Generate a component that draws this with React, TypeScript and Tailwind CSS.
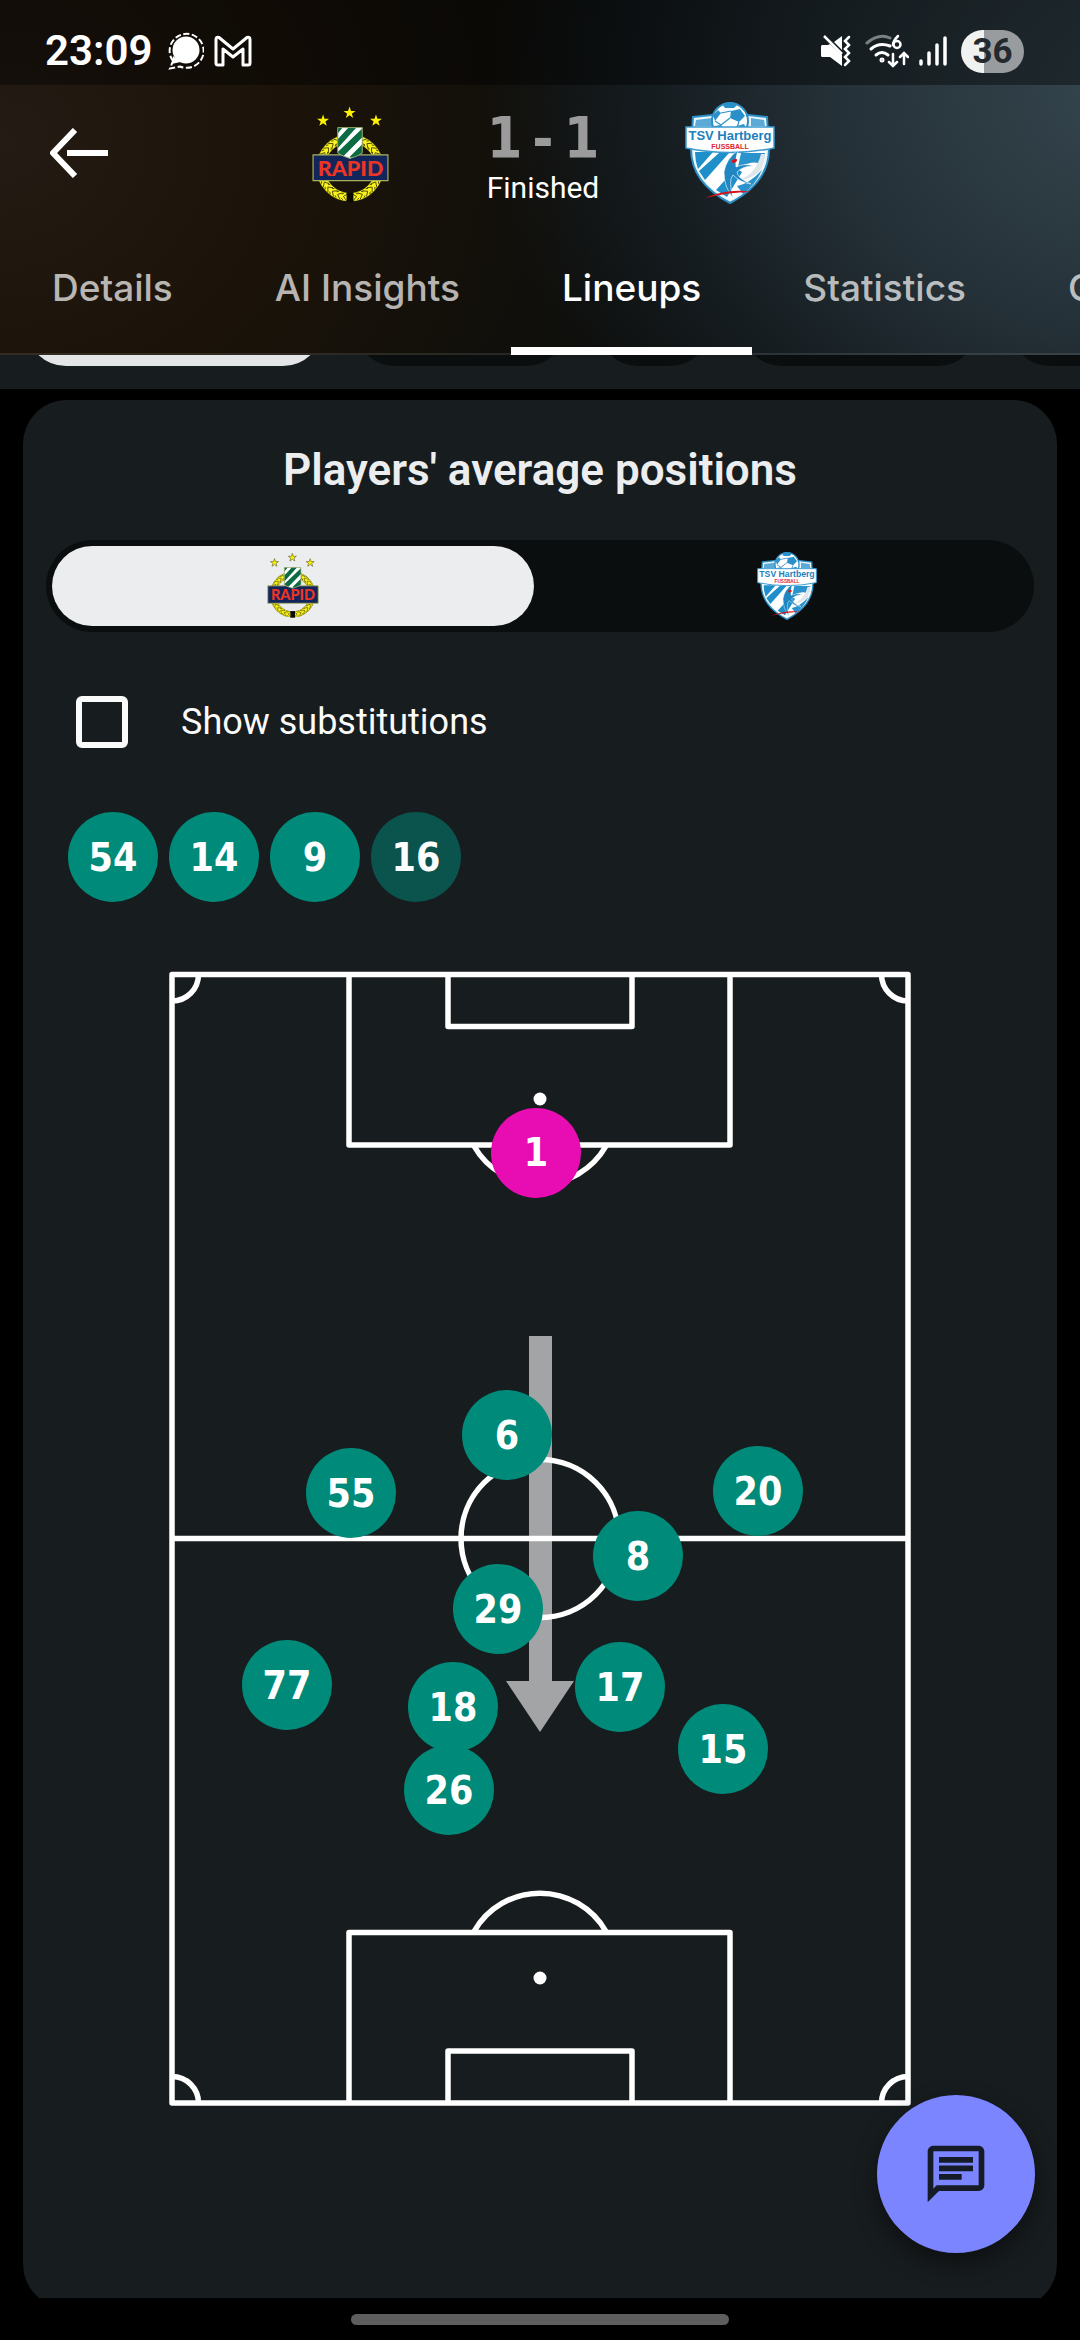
import { useState } from 'react';
import { MdOutlineChat } from 'react-icons/md';

interface Player {
  number: number;
  x: number;
  y: number;
  keeper?: boolean;
}

// Pitch coordinates, in the units of the pitch viewBox
const PITCH_W = 742;
const PITCH_H = 1136;

const players: Player[] = [
  { number: 1, x: 367, y: 182, keeper: true },
  { number: 6, x: 338, y: 464 },
  { number: 55, x: 182, y: 522 },
  { number: 20, x: 589, y: 520 },
  { number: 8, x: 469, y: 585 },
  { number: 29, x: 329, y: 638 },
  { number: 77, x: 118, y: 714 },
  { number: 18, x: 284, y: 736 },
  { number: 17, x: 451, y: 716 },
  { number: 15, x: 554, y: 778 },
  { number: 26, x: 280, y: 819 },
];

const bench = [
  { number: 54, used: true },
  { number: 14, used: true },
  { number: 9, used: true },
  { number: 16, used: false },
];

const tabs = ['Details', 'AI Insights', 'Lineups', 'Statistics', 'Odds'];

const star = 'M0-6.4 1.5-2H6.1L2.4.8 3.8 5.2 0 2.5-3.8 5.2-2.4.8-6.1-2H-1.5Z';

// Wreath veins, one pair every 12 degrees
const veins = Array.from({ length: 30 }, (_, i) => i * 12);

function RapidCrest({ className, outline }: { className?: string; outline?: boolean }) {
  return (
    <svg viewBox="0 0 78 100" className={className} role="img" aria-label="Rapid">
      <g fill="#fff200" stroke={outline ? '#4a4a20' : 'none'} strokeWidth="0.8">
        <path d={star} transform="translate(11 15)" />
        <path d={star} transform="translate(38 7)" />
        <path d={star} transform="translate(65 15)" />
      </g>
      <circle cx="38.500" cy="63" r="30" fill="none" stroke="#6b6808" strokeWidth="9" />
      <circle cx="38.500" cy="63" r="30" fill="none" stroke="#fbf51d" strokeWidth="8" />
      <g fill="none" stroke="#4b4806" strokeWidth="0.900">
        {veins.map((a) => (
          <path
            key={a}
            d={a > 180 ? 'M35 29.500l4 3.500-4 3.500M39 29.500l2 1.500M39 36.500l2-1.500' : 'M42 29.500 38 33l4 3.500M38 29.500l-2 1.500M38 36.500l-2-1.500'}
            transform={`rotate(${a} 38.5 63)`}
          />
        ))}
      </g>
      <path d="M35 88h7v10h-7z" fill="#0a0a05" />
      <path d="M.8 49.800h76.400v26.400H.8z" fill="#13265c" stroke="#a8b25a" strokeWidth="1.200" />
      <path d="M26 22h25v26q-6 4-12.500 5.500Q32 52 26 48Z" fill="#fff" />
      <g fill="#0b6b43">
        <path d="M26 22h5l-5 6zM37 22h8L26 43v-9zM51 23v9L32 51l-6-3v-1zM51 39v9q-5 3-10 5l-3-1z" />
      </g>
      <path d="M26 22h25v26q-6 4-12.500 5.500Q32 52 26 48Z" fill="none" stroke="#8fa060" strokeWidth="1" />
      <text x="39" y="71" textAnchor="middle" fill="#ee3524" className="font-['Lato','Liberation_Sans',sans-serif] text-[22px] font-black">
        RAPID
      </text>
    </svg>
  );
}

function HartbergCrest({ className }: { className?: string }) {
  return (
    <svg viewBox="0 0 90 102" className={className} role="img" aria-label="TSV Hartberg">
      <path d="M8 15 27 13h36l19 2 2 32c0 24-16 42-39 54C22 89 6 71 6 47Z" fill="#e9f5fb" stroke="#2b8fc6" strokeWidth="2" />
      <path d="M11 18 27 16v8H10zM66 16l13 2 1 6H66z" fill="#5aa9d6" />
      <path d="M9 48c0 22 14 38 36 50 22-12 36-28 36-50Z" fill="#fff" />
      <path d="M10 50h18L13 67q-3-8-3-17ZM44 51 20 78l-6-9 20-18zM31 88l20-22 6 4-15 25z" fill="#1f8fca" />
      <path d="M56 51h24q-1 8-3 12-6-6-24 2zM77 68q-6 14-19 24l-6-8q12-2 25-16Z" fill="#2b93cb" />
      <path d="M76 52q-5 20-22 26 14-1 22-10 4-8 4-16z" fill="#dfe6ea" />
      <circle cx="45" cy="19" r="18" fill="#fff" stroke="#2b8fc6" strokeWidth="2" />
      <path d="M37 2q8-3 16 0l-4 4h-9zM46 9l9-2 5 7-6 6-9-4zM28 13l5-5 3 3-6 8zM29 24l7-1 5 7H29zM52 24l7-2 3 6H52z" fill="#2a90c9" />
      <path d="M36 11l10-2M36 23l9-7M36 23l-6-4M54 20l-2 5M41 29l11-4" stroke="#2a90c9" strokeWidth="1.200" />
      <path d="M1 25h88v21q-44 9-88 0Z" fill="#fff" stroke="#3d9bcf" strokeWidth="1.500" />
      <path d="M53 48q-12 9-14 22 0 15 9 26-5-18 0-23 8 8 18 9-14-6-14-12 6-6 16-6-8-3-17 1-1-8 2-17Z" fill="#1f86c2" stroke="#fff" strokeWidth="0.600" />
      <ellipse cx="49.500" cy="59" rx="2.800" ry="1.800" fill="#d7141a" transform="rotate(-25 49 59)" />
      <path d="M20 96Q44 86 66 90 44 90 20 96Z" fill="#d7141a" />
      <text x="45" y="38" textAnchor="middle" fill="#1c80bd" className="font-['Liberation_Sans',sans-serif] text-[13px] font-bold">
        TSV Hartberg
      </text>
      <text x="45" y="46.500" textAnchor="middle" fill="#e0222a" className="font-['Liberation_Sans',sans-serif] text-[7px] font-bold">
        FUSSBALL
      </text>
    </svg>
  );
}

function StatusBar() {
  return (
    <div className="flex h-[85px] items-center bg-black/40 pt-[17px] pr-14 pl-[45px] text-white">
      <span className="font-['Roboto',sans-serif] text-[42px] leading-none font-semibold">23:09</span>
      <svg viewBox="0 0 36 38" className="ml-4 h-[38px] w-9">
        <circle cx="18" cy="18" r="13.500" fill="#fff" />
        <path d="M5 24 3.500 32l9-2z" fill="#fff" />
        <path d="M5 29a17 17 0 1 1 7 5.500L2 36.500Z" fill="none" stroke="#fff" strokeWidth="2" strokeDasharray="6 2.500" />
      </svg>
      <svg viewBox="0 0 38 32" className="ml-2.5 h-8 w-[38px]">
        <path
          d="M5 2.500 19 14 33 2.500q3-1 3 2V28q0 2-2 2h-5V14L19 22 9 14v16H4q-2 0-2-2V4.500q0-3 3-2Z"
          fill="none"
          stroke="#fff"
          strokeWidth="3"
          strokeLinejoin="round"
        />
      </svg>
      <div className="ml-auto flex items-center">
        <svg viewBox="0 0 32 32" className="mr-3 size-8">
          <path d="M1 10h6l2-1L21 20v11L9 22H1q-1 0-1-2v-8q0-2 1-2ZM13 7l8-6v14z" fill="#fff" />
          <path d="M3 1l18 18" stroke="#fff" strokeWidth="2.500" />
          <path d="M28 2l-4 4 4 4-4 4 4 4-4 4 4 4-4 4" fill="none" stroke="#fff" strokeWidth="2.500" strokeLinecap="round" />
        </svg>
        <svg viewBox="0 0 44 34" className="mr-2.5 h-[34px] w-11" fill="none" stroke="#fff" strokeWidth="3" strokeLinecap="round">
          <path d="M2 9Q14-1 25 4" stroke="#7b8083" />
          <path d="M6 15q8-7 19-3M11 21q6-5 12 0" />
          <circle cx="17" cy="26" r="1" />
          <path d="M33 2q-5 5-5 9" strokeWidth="2.500" />
          <circle cx="32" cy="10.500" r="3.500" strokeWidth="2.500" />
          <path d="M28 20v12m-4-4 4 4 4-4M39 30V19m-4 4 4-4 4 4" strokeWidth="2.500" />
        </svg>
        <svg viewBox="0 0 28 32" className="mr-3.5 h-8 w-7" stroke="#fff" strokeWidth="3.500" strokeLinecap="round">
          <path d="M2 26v3M10 18v11M18 10v19M26 3v26" />
        </svg>
        <div className="flex h-[43px] w-[63px] items-center justify-center rounded-full bg-linear-to-r from-[#f0f1f1] from-36% to-[#999c9e] to-36% text-[#23292d]">
          <span className="font-['Roboto',sans-serif] text-[35px] leading-none font-bold">36</span>
        </div>
      </div>
    </div>
  );
}

function Header() {
  return (
    <header className="bg-[#0d0e0c] bg-[radial-gradient(ellipse_60%_150%_at_105%_25%,#36474f_0%,#253138_45%,#151c20_75%,#0d0e0c00_100%),radial-gradient(ellipse_60%_160%_at_0%_40%,#241b14_0%,#1b1309_45%,#0d0e0c00_100%)] text-white">
      <StatusBar />
      <div className="flex h-[135px] items-start px-[50px] pt-[17px]">
        <button type="button" aria-label="Back" className="mt-[26px] mr-[204px]">
          <svg viewBox="0 0 58 50" className="h-[50px] w-[58px]" fill="none" stroke="#fff" strokeWidth="6">
            <path d="M25 2 3 25l22 23" strokeLinejoin="round" />
            <path d="M17 25h41" />
          </svg>
        </button>
        <RapidCrest className="mt-1 h-[98px] w-[77px]" />
        <div className="w-[296px] pl-3 text-center">
          <div className="flex justify-center gap-2.5 pt-2 font-['DejaVu_Sans_Condensed','DejaVu_Sans',sans-serif] text-[57px] leading-[56px] font-bold text-[#9b9b9b]">
            <span>1</span>
            <span>-</span>
            <span>1</span>
          </div>
          <div className="font-['Roboto',sans-serif] text-[30px] leading-[44px]">Finished</div>
        </div>
        <HartbergCrest className="h-[102px] w-[90px]" />
      </div>
      <nav className="flex h-[135px] overflow-hidden pl-px shadow-[inset_0_-2px_0_rgba(255,255,255,0.1)]">
        {tabs.map((tab) => (
          <a
            key={tab}
            href={`#${tab}`}
            className={`flex shrink-0 items-center border-b-8 px-[51px] pt-2 font-['Inter',sans-serif] text-[37px] font-medium ${
              tab === 'Lineups' ? 'border-white text-white' : 'border-transparent text-white/70'
            }`}
          >
            {tab}
          </a>
        ))}
      </nav>
    </header>
  );
}

// Lower edge of the filter chips that have scrolled under the header
function FilterChips() {
  return (
    <div className="flex h-[34px] shrink-0 items-end gap-8 overflow-hidden bg-[#171c1e] pb-[23px] pl-[26px]">
      <div className="h-20 w-[297px] shrink-0 rounded-full bg-[#e3e5e6]" />
      <div className="h-20 w-[211px] shrink-0 rounded-full bg-[#0a0e0f]" />
      <div className="h-20 w-28 shrink-0 rounded-full bg-[#0a0e0f]" />
      <div className="h-20 w-[236px] shrink-0 rounded-full bg-[#0a0e0f]" />
      <div className="h-20 w-[211px] shrink-0 rounded-full bg-[#0a0e0f]" />
    </div>
  );
}

function Shirt({ number, className }: { number: number; className: string }) {
  return (
    <span
      className={`flex size-[90px] items-center justify-center rounded-full font-['DejaVu_Sans_Condensed','DejaVu_Sans',sans-serif] text-[39px] leading-none font-bold text-white ${className}`}
    >
      {number}
    </span>
  );
}

function Pitch() {
  return (
    <div className="relative mx-auto mt-[69px] w-full max-w-[742px]">
      <svg viewBox={`0 0 ${PITCH_W} ${PITCH_H}`} className="block w-full" fill="none" stroke="#fff" strokeWidth="5.500" strokeLinejoin="round">
        <rect x="3" y="3.500" width="736" height="1128.500" />
        <path d="M3 567.500h736" />
        <circle cx="371" cy="567.500" r="79" />
        <path d="M180 3.500v170.500h381V3.500M279 3.500v52h184v-52M305 175a76 76 0 0 0 132 0" />
        <path d="M180 1132V961.500h381V1132M279 1132v-52h184v52M305 960.500a76 76 0 0 1 132 0" />
        <path d="M29.500 3.500A26.500 26.500 0 0 1 3 30M712.500 3.500A26.500 26.500 0 0 0 739 30" />
        <path d="M29.500 1132A26.500 26.500 0 0 0 3 1105.500M712.500 1132a26.500 26.500 0 0 1 26.500-26.500" />
        <circle cx="371" cy="128" r="6.500" fill="#fff" stroke="none" />
        <circle cx="371" cy="1007" r="6.500" fill="#fff" stroke="none" />
        <path d="M360 365h23v346h-23zM337 710h68l-34 51z" fill="#fff" fillOpacity="0.600" stroke="none" />
      </svg>
      {players.map((p) => (
        <div
          key={p.number}
          className="absolute -translate-x-1/2 -translate-y-1/2"
          style={{ left: `${(p.x / PITCH_W) * 100}%`, top: `${(p.y / PITCH_H) * 100}%` }}
        >
          <Shirt number={p.number} className={p.keeper ? 'bg-[#e80cb3]' : 'bg-[#008a79]'} />
        </div>
      ))}
    </div>
  );
}

export default function App() {
  const [team, setTeam] = useState<'home' | 'away'>('home');
  const [showSubs, setShowSubs] = useState(false);

  return (
    <div className="flex min-h-screen flex-col bg-black">
      <Header />
      <FilterChips />

      <main className="flex flex-1 flex-col overflow-hidden px-[23px] pt-[11px]">
        <section className="-mb-2.5 flex-1 rounded-[44px] bg-[#171c1e] px-[23px] pt-[42px] pb-[200px]">
          <h2 className="text-center font-['Roboto',sans-serif] text-[44px] leading-[56px] font-semibold text-[#ebedee]">
            Players' average positions
          </h2>

          <div className="mt-[42px] flex gap-3 rounded-full bg-[#0a0e0f] p-1.5">
            <button
              type="button"
              onClick={() => setTeam('home')}
              className={`flex h-20 flex-1 items-center justify-center rounded-full ${team === 'home' ? 'bg-[#ebedee]' : ''}`}
            >
              <RapidCrest outline className="h-[66px] w-[52px]" />
            </button>
            <button
              type="button"
              onClick={() => setTeam('away')}
              className={`flex h-20 flex-1 items-center justify-center rounded-full ${team === 'away' ? 'bg-[#ebedee]' : ''}`}
            >
              <HartbergCrest className="h-[68px] w-[60px]" />
            </button>
          </div>

          <label className="mt-16 ml-[30px] flex items-center gap-[53px] text-[#fafafa]">
            <input
              type="checkbox"
              checked={showSubs}
              onChange={(e) => setShowSubs(e.target.checked)}
              className="size-[52px] appearance-none rounded-md border-6 border-[#fafafa] checked:bg-[#008a79]"
            />
            <span className="font-['Roboto',sans-serif] text-[36px] leading-[52px]">Show substitutions</span>
          </label>

          <div className="mt-16 ml-[22px] flex gap-[11px]">
            {bench.map((b) => (
              <Shirt key={b.number} number={b.number} className={b.used ? 'bg-[#008a79]' : 'bg-[#0b534d]'} />
            ))}
          </div>

          <Pitch />
        </section>
      </main>

      <button
        type="button"
        aria-label="Chat"
        className="fixed right-[45px] bottom-[87px] flex size-[158px] items-center justify-center rounded-full bg-[#7b85ff] text-[#151c28] shadow-[0_10px_24px_rgba(0,0,0,0.45)]"
      >
        <MdOutlineChat className="size-[68px]" />
      </button>

      <footer className="relative flex h-[42px] shrink-0 justify-center bg-black pt-4">
        <div className="h-[11px] w-[35%] rounded-full bg-[#5e5e5e]" />
      </footer>
    </div>
  );
}
